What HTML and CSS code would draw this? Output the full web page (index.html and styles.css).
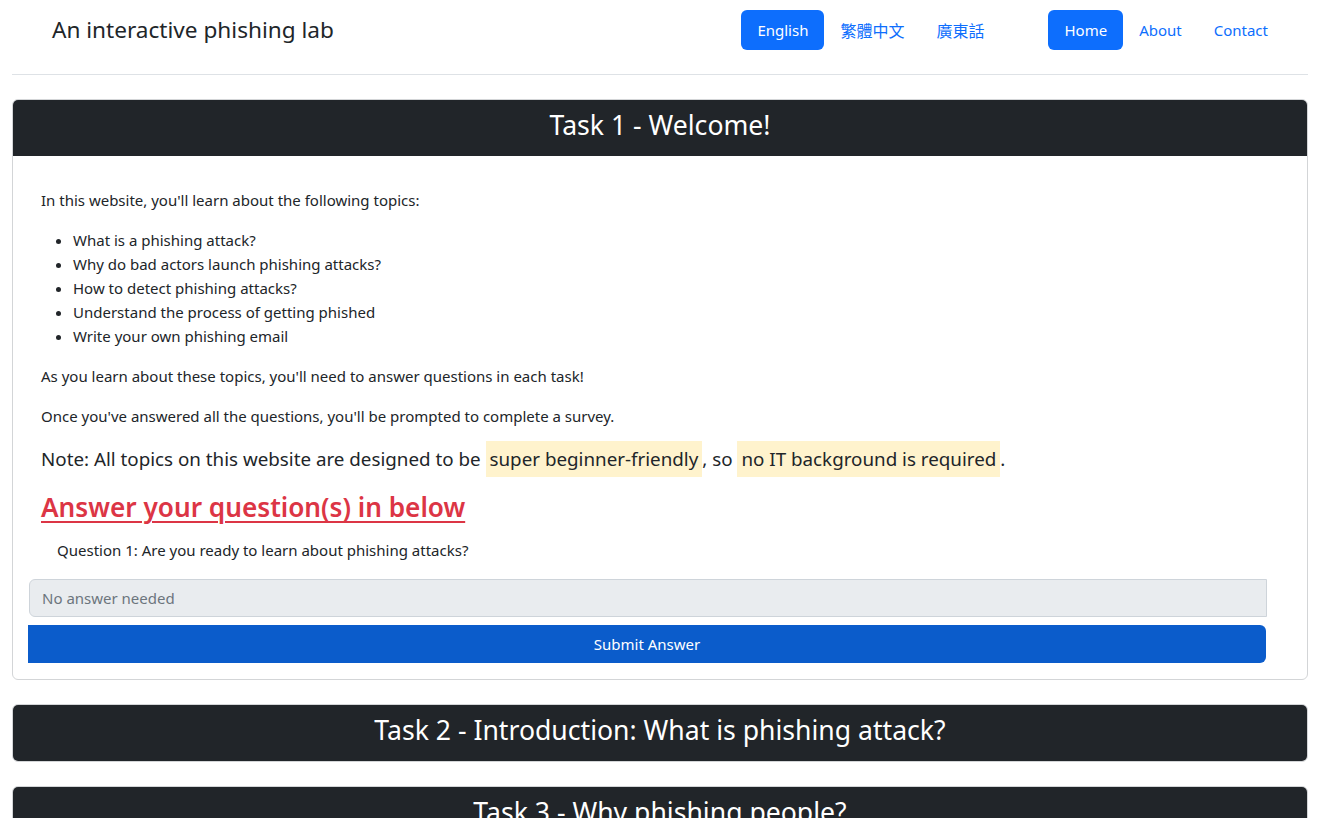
FILE: index.html
```html
<!DOCTYPE html>
<html lang="en">
<head>
<meta charset="utf-8">
<title>An interactive phishing lab</title>
<link rel="stylesheet" href="styles.css">
</head>
<body>
<div class="page">
  <header class="topbar">
    <span class="brand">An interactive phishing lab</span>
    <nav class="navs">
      <ul class="pills">
        <li><a class="pill active" href="#">English</a></li>
        <li><a class="pill cjk" href="#">繁體中文</a></li>
        <li><a class="pill cjk" href="#">廣東話</a></li>
      </ul>
      <ul class="pills">
        <li><a class="pill active" href="#">Home</a></li>
        <li><a class="pill" href="#">About</a></li>
        <li><a class="pill" href="#">Contact</a></li>
      </ul>
    </nav>
  </header>

  <section class="card">
    <h2 class="card-header">Task 1 - Welcome!</h2>
    <div class="card-body">
      <div class="content">
        <p>In this website, you'll learn about the following topics:</p>
        <ul class="topics">
          <li>What is a phishing attack?</li>
          <li>Why do bad actors launch phishing attacks?</li>
          <li>How to detect phishing attacks?</li>
          <li>Understand the process of getting phished</li>
          <li>Write your own phishing email</li>
        </ul>
        <p>As you learn about these topics, you'll need to answer questions in each task!</p>
        <p>Once you've answered all the questions, you'll be prompted to complete a survey.</p>
        <p class="note">Note: All topics on this website are designed to be <mark>super beginner-friendly</mark>, so <mark>no IT background is required</mark>.</p>
        <h3 class="answer-title">Answer your question(s) in below</h3>
        <p class="question">Question 1: Are you ready to learn about phishing attacks?</p>
      </div>
      <form class="answer-form">
        <input class="answer-input" type="text" placeholder="No answer needed" disabled>
        <button class="submit-btn" type="button">Submit Answer</button>
      </form>
    </div>
  </section>

  <section class="card">
    <h2 class="card-header">Task 2 - Introduction: What is phishing attack?</h2>
  </section>

  <section class="card">
    <h2 class="card-header">Task 3 - Why phishing people?</h2>
  </section>
</div>
</body>
</html>
```

FILE: styles.css
```css
html, body {
  margin: 0;
  padding: 0;
  background: #fff;
}
body {
  font-family: "Noto Sans", "Noto Sans CJK TC", sans-serif;
  color: #212529;
  font-size: 15px;
  line-height: 24px;
  overflow: hidden;
}
.page {
  padding: 0 17px 0 12px;
}
.topbar {
  display: flex;
  justify-content: space-between;
  align-items: center;
  padding: 10px 24px 24px 40px;
  border-bottom: 1px solid #dee2e6;
  margin-bottom: 24px;
}
.brand {
  font-size: 22.6px;
  line-height: 40px;
  color: #212529;
}
.navs {
  display: flex;
  gap: 48px;
}
.pills {
  display: flex;
  list-style: none;
  margin: 0;
  padding: 0;
}
.pill {
  display: block;
  padding: 8px 16px;
  line-height: 24px;
  font-size: 15px;
  color: #0d6efd;
  text-decoration: none;
  border-radius: 6px;
}
.pill.cjk {
  font-family: "Noto Sans CJK TC", sans-serif;
  font-size: 16px;
}
.pill.active {
  background: #0d6efd;
  color: #fff;
}
.card {
  border: 1px solid #d3d5d7;
  border-radius: 6px;
  margin-bottom: 24px;
  overflow: hidden;
}
.card-header {
  margin: 0;
  background: #212529;
  color: #fff;
  text-align: center;
  font-weight: 400;
  font-size: 26.6px;
  line-height: 50px;
  height: 50px;
  padding-bottom: 6px;
}
.card-body {
  padding: 16px;
}
.content {
  padding: 16px 12px 0;
}
.content p {
  margin: 0 0 16px;
}
.topics {
  margin: 0 0 16px;
  padding-left: 32px;
}
.note {
  font-size: 18.8px;
  line-height: 30px;
}
mark {
  background: #fff3cd;
  color: #212529;
  padding: 5px 4px;
}
.answer-title {
  margin: 0 0 14px;
  font-size: 26.2px;
  line-height: 34px;
  font-weight: 600;
  color: #dc3545;
  text-decoration: underline;
  text-underline-offset: 4px;
  text-decoration-thickness: 2px;
}
.content p.question {
  margin: 0 0 17px 16px;
}
.answer-form {
  display: flex;
  flex-direction: column;
  gap: 8px;
}
.answer-input {
  margin: 0 24px 0 0;
  height: 38px;
  box-sizing: border-box;
  padding: 6px 12px;
  font: inherit;
  font-size: 15px;
  background: #e9ecef;
  border: 1px solid #ced4da;
  border-radius: 6px 0 0 6px;
  color: #6c757d;
}
.answer-input::placeholder {
  color: #6c757d;
}
.submit-btn {
  margin: 0 25px 0 -1px;
  height: 38px;
  font: inherit;
  font-size: 15px;
  color: #fff;
  background: #0b5ccb;
  border: none;
  border-radius: 0 6px 6px 0;
}
```
